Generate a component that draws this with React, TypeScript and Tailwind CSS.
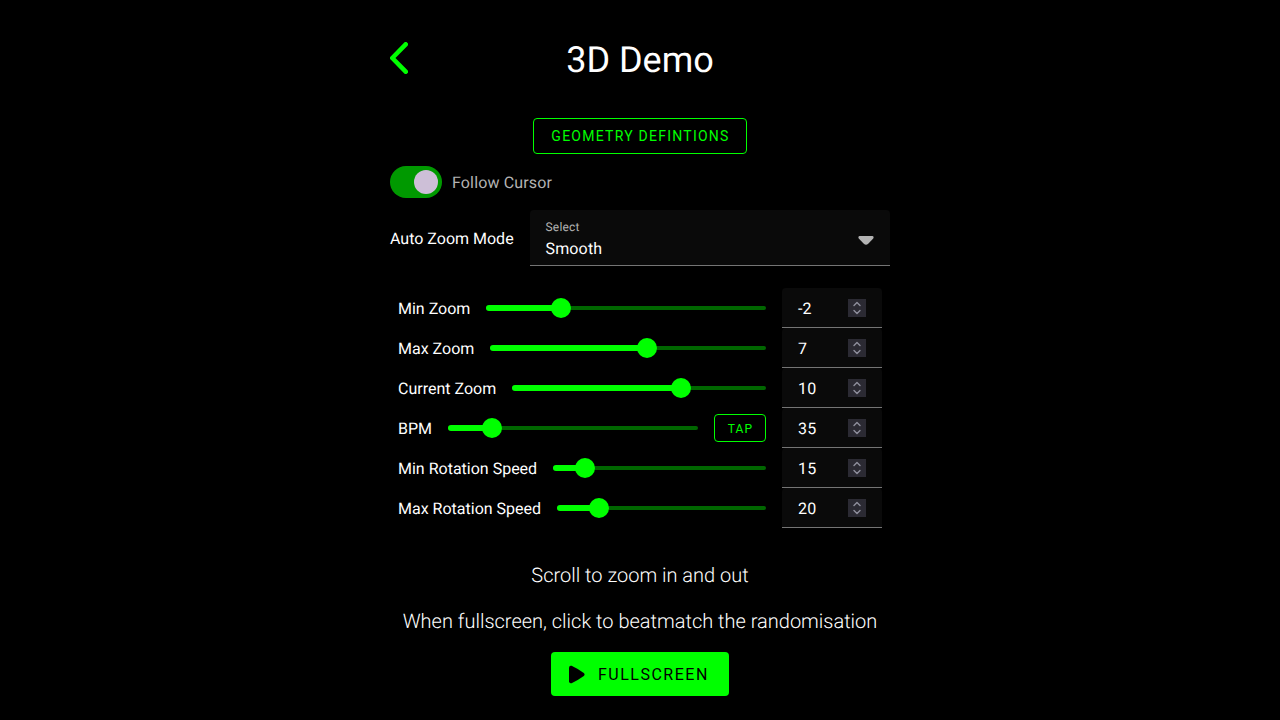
type Row = { label: string; value: string; percent: number; tap?: boolean };

const rows: Row[] = [
  { label: "Min Zoom", value: "-2", percent: 26.67 },
  { label: "Max Zoom", value: "7", percent: 56.67 },
  { label: "Current Zoom", value: "10", percent: 66.67 },
  { label: "BPM", value: "35", percent: 17.5, tap: true },
  { label: "Min Rotation Speed", value: "15", percent: 15 },
  { label: "Max Rotation Speed", value: "20", percent: 20 },
];

function Slider({ percent }: { percent: number }) {
  return (
    <div className="relative flex h-5 flex-1 items-center">
      <div className="h-1 w-full rounded-full bg-[#006600]" />
      <div className="absolute left-0 h-1.5 rounded-full bg-[#00ff00]" style={{ width: `${percent}%` }} />
      <div className="absolute size-5 -translate-x-1/2 rounded-full bg-[#00ff00]" style={{ left: `${percent}%` }} />
    </div>
  );
}

function NumberField({ value }: { value: string }) {
  return (
    <div className="flex h-10 w-[100px] items-center justify-between rounded-t border-b border-[#757575] bg-[#0a0a0a] px-4">
      <span className="pt-0.5 leading-6 tracking-[0.15px]">{value}</span>
      <svg className="size-[18px] bg-[#2b2a33]" viewBox="0 0 18 18" fill="none" stroke="#8f8f9d" strokeWidth="1.4" strokeLinecap="round" strokeLinejoin="round">
        <path d="M6 6.4L9 3.4L12 6.4M6 11.6L9 14.6L12 11.6" />
      </svg>
    </div>
  );
}

export default function App() {
  return (
    <div className="flex h-[720px] justify-center overflow-hidden bg-black font-['Roboto',sans-serif] text-base text-white [text-rendering:geometricPrecision]">
      <main className="flex w-[500px] flex-col items-center">
        <header className="flex h-[118px] w-full items-start justify-between pt-[38px]">
          <svg className="mt-1 h-8 w-[18px]" viewBox="0 0 18 32" fill="none" stroke="#00ff00" strokeWidth="4.6" strokeLinecap="round" strokeLinejoin="round">
            <path d="M15.7 2.3L2.3 16L15.7 29.7" />
          </svg>
          <h1 className="text-4xl leading-[44px]">3D Demo</h1>
          <span className="w-[18px]" />
        </header>
        <button className="h-9 w-[214px] rounded border border-[#00ff00] pl-px text-sm tracking-[1.25px] text-[#00ff00]">
          GEOMETRY DEFINTIONS
        </button>
        <div className="mt-3 flex h-8 w-full items-center gap-2.5">
          <span className="flex h-8 w-[52px] items-center justify-end rounded-full bg-[#009900] pr-1">
            <span className="size-6 rounded-full bg-[#cdbfd7]" />
          </span>
          <span className="pt-0.5 leading-6 tracking-[0.15px] text-[#b3b3b3]">Follow Cursor</span>
        </div>
        <div className="mt-3 flex h-14 w-full items-center justify-between">
          <span className="pt-0.5 leading-6">Auto Zoom Mode</span>
          <div className="flex h-14 w-[360px] items-center justify-between rounded-t border-b border-[#757575] bg-[#0a0a0a] pr-4 pl-[15.5px]">
            <div className="flex flex-col gap-0.5 pt-1">
              <span className="text-xs leading-4 tracking-[0.2px] text-[#b3b3b3]">Select</span>
              <span className="leading-6 tracking-[0.15px]">Smooth</span>
            </div>
            <svg className="mt-[5px] h-[9px] w-4" viewBox="0 0 16 9" fill="#b3b3b3">
              <path d="M1.5 0H14.5Q16.5 .8 15 2.8L10.2 7.8Q8 9.8 5.8 7.8L1 2.8Q-.5 .8 1.5 0Z" />
            </svg>
          </div>
        </div>
        <div className="mt-[22px] flex w-full flex-col px-2">
          {rows.map((row) => (
            <div key={row.label} className="flex h-10 items-center gap-4">
              <span className="pt-0.5 leading-6">{row.label}</span>
              <Slider percent={row.percent} />
              {row.tap && (
                <button className="h-7 w-[52px] rounded border border-[#00ff00] pt-0.5 pl-px text-xs tracking-[1.1px] text-[#00ff00]">TAP</button>
              )}
              <NumberField value={row.value} />
            </div>
          ))}
        </div>
        <p className="mt-[33px] text-xl leading-7 font-light">Scroll to zoom in and out</p>
        <p className="mt-[18px] text-xl leading-7 font-light">When fullscreen, click to beatmatch the randomisation</p>
        <button className="mt-[17px] flex h-11 w-[178px] items-center rounded bg-[#00ff00] pl-[18px] text-black">
          <svg className="h-[19px] w-4" viewBox="0 0 16 19" fill="black">
            <path d="M0 2.7Q.2 .1 2.6 .8Q9 3.8 14.8 8Q16.4 9.5 14.8 11Q9 15.2 2.6 18.2Q.2 18.9 0 16.3Z" />
          </svg>
          <span className="ml-[13px] pt-0.5 tracking-[1.5px]">FULLSCREEN</span>
        </button>
      </main>
    </div>
  );
}
